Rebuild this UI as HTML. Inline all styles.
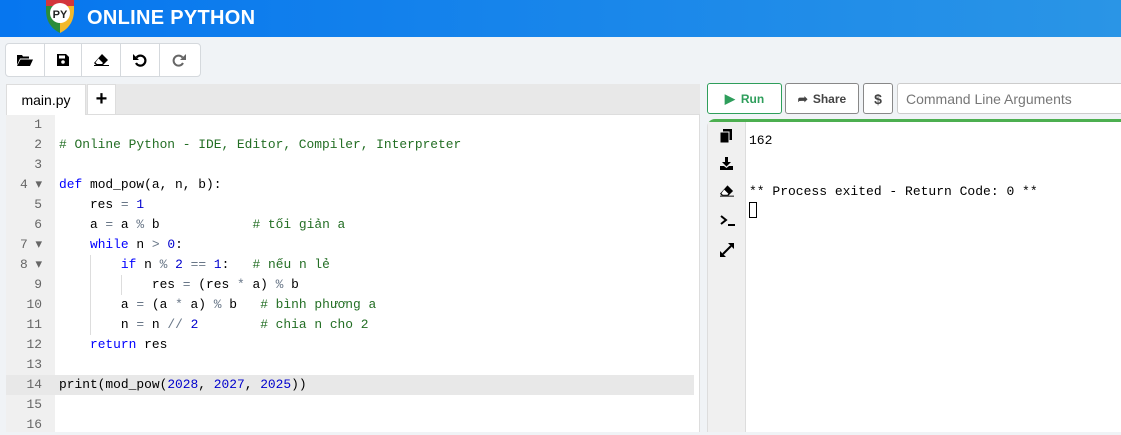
<!DOCTYPE html><html><head><style>
*{margin:0;padding:0;box-sizing:border-box}
body{width:1121px;height:432px;overflow:hidden;background:#f0f3f6;font-family:"Liberation Sans",sans-serif;position:relative}
.hdr{position:absolute;left:0;top:0;width:1121px;height:37px;background:linear-gradient(90deg,#0676ef,#2a95e6)}
.hdr .t{position:absolute;left:87px;top:7px;color:#fff;font-weight:bold;font-size:20px;letter-spacing:0.3px}
.tb{position:absolute;left:5px;top:43px;height:34px;width:196px;background:#fff;border:1px solid #d5d9dd;border-radius:4px;display:flex}
.tb div{border-right:1px solid #d5d9dd;display:flex;align-items:center;justify-content:center}
.tabs{position:absolute;left:6px;top:84px;width:694px;height:31px;background:#e8e8e8;border-bottom:1px solid #ddd}
.tab{position:absolute;top:0;height:31px;background:#fff;font-size:14px;display:flex;align-items:center;justify-content:center;border:1px solid #ddd;border-bottom:none}
.ed{position:absolute;left:6px;top:115px;width:694px;height:317px;background:#fff;border-right:1px solid #ddd}
.gut{position:absolute;left:0;top:0;width:49px;height:317px;background:#f0f0f0}
.ln{position:absolute;font-family:"Liberation Mono",monospace;font-size:12.9px;line-height:20px;height:20px}
.num{left:0;width:36px;text-align:right;color:#666}
.code{left:53px;color:#000;white-space:pre}
.k{color:#0000ff}.n{color:#0000cd}.c{color:#236e24}.o{color:#687687}
.btn{position:absolute;top:83px;height:31px;background:#fff;border:1px solid #888;border-radius:3px;font-size:12px;font-weight:bold;display:flex;align-items:center;justify-content:center;color:#444}
.out{position:absolute;left:707px;top:119px;width:414px;height:313px;background:#fff;border-top:3px solid #4caf50;border-top-left-radius:8px;border-left:1px solid #ddd}
.side{position:absolute;left:0;top:0;width:38px;height:310px;background:#f0f0f0;border-right:1px solid #ddd}
.side svg{position:absolute;left:12px}
.mono{font-family:"Liberation Mono",monospace;font-size:13px;position:absolute;left:41px;color:#000}
</style></head><body>
<div class="hdr">
<svg style="position:absolute;left:44px;top:0" width="32" height="34" viewBox="0 0 32 34"><path d="M2 0 L16 0 L16 33 C6 28 2 20 2 10Z" fill="#2b8c3a"/><path d="M16 0 L30 0 L30 10 C30 20 26 28 16 33Z" fill="#f2b82a"/><path d="M2 0 L30 0 L30 6 L2 6Z" fill="#d3363b"/><circle cx="16" cy="13" r="10" fill="#fff"/><text x="16" y="18" font-size="11" font-weight="bold" text-anchor="middle" font-family="Liberation Sans" fill="#222">PY</text></svg>
<div class="t">ONLINE PYTHON</div></div>
<div class="tb">
<div style="width:39px"><svg width="16" height="12" viewBox="0 0 16 12"><path d="M0 1h5l1 1.5h6v2H3L0 11Z M3.5 5.5H16L13 12H0Z" fill="#000"/></svg></div>
<div style="width:37px"><svg width="12" height="12" viewBox="0 0 12 12"><path d="M0 0h9l3 3v9H0Z" fill="#000"/><rect x="2" y="1.5" width="6" height="3" fill="#fff"/><circle cx="6" cy="8" r="1.8" fill="#fff"/></svg></div>
<div style="width:39px"><svg width="15" height="12" viewBox="0 0 15 12"><path d="M8 0l6 6-5 5H2l-2-2z" fill="#000"/><path d="M4.5 4.5L9 9 8 10H3L1.5 8.5z" fill="#fff"/><rect x="0" y="11" width="15" height="1" fill="#000"/></svg></div>
<div style="width:39px"><svg width="14" height="14" viewBox="0 0 14 14"><path d="M3.5 4.5A5 5 0 1 1 3 10" fill="none" stroke="#000" stroke-width="2.2"/><path d="M0 1v6h6z" fill="#000"/></svg></div>
<div style="width:38px;border:none"><svg width="14" height="14" viewBox="0 0 14 14"><path d="M10.5 4.5A5 5 0 1 0 11 10" fill="none" stroke="#666" stroke-width="2"/><path d="M14 1v6H8z" fill="#666"/></svg></div></div>
<div class="tabs"><div class="tab" style="left:0;width:80px">main.py</div><div class="tab" style="left:81px;width:29px;font-size:20px;font-weight:bold;border-bottom:1px solid #ddd">+</div></div>
<div class="ed"><div class="gut"></div>
<div style="position:absolute;left:0;top:260px;width:688px;height:20px;background:#e8e8e8"></div>
<div style="position:absolute;left:84px;top:140px;width:1px;height:80px;background:#ddd"></div>
<div style="position:absolute;left:115px;top:160px;width:1px;height:20px;background:#ddd"></div>
<div class="ln num" style="top:0">1</div><div class="ln num" style="top:20px">2</div><div class="ln num" style="top:40px">3</div><div class="ln num" style="top:60px">4 ▾</div><div class="ln num" style="top:80px">5</div><div class="ln num" style="top:100px">6</div><div class="ln num" style="top:120px">7 ▾</div><div class="ln num" style="top:140px">8 ▾</div><div class="ln num" style="top:160px">9</div><div class="ln num" style="top:180px">10</div><div class="ln num" style="top:200px">11</div><div class="ln num" style="top:220px">12</div><div class="ln num" style="top:240px">13</div><div class="ln num" style="top:260px">14</div><div class="ln num" style="top:280px">15</div><div class="ln num" style="top:300px">16</div>
<div class="ln code" style="top:20px"><span class="c"># Online Python - IDE, Editor, Compiler, Interpreter</span></div>
<div class="ln code" style="top:60px"><span class="k">def</span> mod_pow(a, n, b):</div>
<div class="ln code" style="top:80px">    res <span class="o">=</span> <span class="n">1</span></div>
<div class="ln code" style="top:100px">    a <span class="o">=</span> a <span class="o">%</span> b            <span class="c"># tối giản a</span></div>
<div class="ln code" style="top:120px">    <span class="k">while</span> n <span class="o">&gt;</span> <span class="n">0</span>:</div>
<div class="ln code" style="top:140px">        <span class="k">if</span> n <span class="o">%</span> <span class="n">2</span> <span class="o">==</span> <span class="n">1</span>:   <span class="c"># nếu n lẻ</span></div>
<div class="ln code" style="top:160px">            res <span class="o">=</span> (res <span class="o">*</span> a) <span class="o">%</span> b</div>
<div class="ln code" style="top:180px">        a <span class="o">=</span> (a <span class="o">*</span> a) <span class="o">%</span> b   <span class="c"># bình phương a</span></div>
<div class="ln code" style="top:200px">        n <span class="o">=</span> n <span class="o">//</span> <span class="n">2</span>        <span class="c"># chia n cho 2</span></div>
<div class="ln code" style="top:220px">    <span class="k">return</span> res</div>
<div class="ln code" style="top:260px">print(mod_pow(<span class="n">2028</span>, <span class="n">2027</span>, <span class="n">2025</span>))</div>
</div>
<div class="btn" style="left:707px;width:75px;border-color:#2e9e5b;color:#2e9e5b"><span style="font-size:13px;margin-right:6px">▶</span>Run</div>
<div class="btn" style="left:785px;width:74px"><span style="margin-right:5px">➦</span>Share</div>
<div class="btn" style="left:863px;width:30px;font-size:14px">$</div>
<div class="btn" style="left:897px;width:230px;border-color:#ccc;justify-content:flex-start;padding-left:8px;font-weight:normal;font-size:14px;color:#777">Command Line Arguments</div>
<div class="out"><div class="side">
<svg style="top:7px" width="12" height="14" viewBox="0 0 12 14"><rect x="3" y="0" width="9" height="11" fill="#000"/><rect x="0" y="3" width="9" height="11" fill="#000" stroke="#f0f0f0" stroke-width="1"/></svg>
<svg style="top:35px" width="13" height="13" viewBox="0 0 13 13"><path d="M5 0h3v5h3l-4.5 4.5L2 5h3z M0 9h4l2.5 2L9 9h4v4H0z" fill="#000"/></svg>
<svg style="top:63px" width="14" height="12" viewBox="0 0 15 12"><path d="M8 0l6 6-5 5H2l-2-2z" fill="#000"/><path d="M4.5 4.5L9 9 8 10H3L1.5 8.5z" fill="#fff"/><rect x="0" y="11" width="15" height="1" fill="#000"/></svg>
<svg style="top:93px" width="15" height="12" viewBox="0 0 15 12"><path d="M1 1l5 4-5 4" fill="none" stroke="#000" stroke-width="2"/><rect x="8" y="9" width="7" height="2" fill="#000"/></svg>
<svg style="top:121px" width="14" height="14" viewBox="0 0 14 14"><path d="M3 11L11 3" stroke="#000" stroke-width="2"/><path d="M8 0h6v6zM0 8v6h6z" fill="#000"/></svg>
</div>
<div class="mono" style="top:11px">162</div>
<div class="mono" style="top:62px">** Process exited - Return Code: 0 **</div>
<div style="position:absolute;left:41px;top:80px;width:8px;height:16px;border:1px solid #000"></div>
</div>
</body></html>
